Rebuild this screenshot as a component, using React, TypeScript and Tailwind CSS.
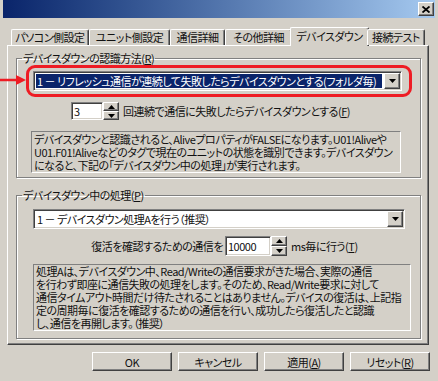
import React from 'react';

const font = "font-['Noto_Sans_CJK_JP','Noto_Sans_CJK_SC',sans-serif] [font-feature-settings:'palt']";

// classic 3D edges
const raised =
    'border border-t-white border-l-white border-b-[#404040] border-r-[#404040] shadow-[inset_-1px_-1px_0_#808080]';
const sunken =
    'border border-t-[#808080] border-l-[#808080] border-b-white border-r-white shadow-[inset_1px_1px_0_#404040,inset_-1px_-1px_0_#d4d0c8]';
const etched = 'border border-[#808080] shadow-[inset_1px_1px_0_#fff,1px_1px_0_#fff]';

type Tab = { label: string; w: string; active?: boolean };

const tabs: Tab[] = [
    { label: 'パソコン側設定', w: 'w-[78px]' },
    { label: 'ユニット側設定', w: 'w-[81px]' },
    { label: '通信詳細', w: 'w-[55px]' },
    { label: 'その他詳細', w: 'w-[67px]' },
    { label: 'デバイスダウン', w: 'w-[79px]', active: true },
    { label: '接続テスト', w: 'w-[58px]' },
];

function DownArrow() {
    return (
        <svg width="7" height="4" viewBox="0 0 7 4">
            <path d="M0 0h7L3.5 4z" fill="#000" />
        </svg>
    );
}

function DropButton() {
    return (
        <div className={`w-[16px] h-[16px] bg-[#d4d0c8] flex items-center justify-center ${raised}`}>
            <DownArrow />
        </div>
    );
}

function Spinner({ h }: { h: string }) {
    return (
        <div className={`flex flex-col w-[16px] ${h}`}>
            <div className={`flex-1 bg-[#d4d0c8] flex items-center justify-center ${raised}`}>
                <svg width="7" height="4" viewBox="0 0 7 4">
                    <path d="M0 4h7L3.5 0z" fill="#000" />
                </svg>
            </div>
            <div className={`flex-1 bg-[#d4d0c8] flex items-center justify-center ${raised}`}>
                <DownArrow />
            </div>
        </div>
    );
}

function Btn({ children }: { children: React.ReactNode }) {
    return (
        <button className={`w-[80px] h-[19px] bg-[#d4d0c8] flex items-center justify-center whitespace-nowrap ${raised}`}>
            {children}
        </button>
    );
}

export default function App() {
    return (
        <div className={`relative w-[438px] h-[381px] bg-[#d4d0c8] px-[3px] text-[11px] tracking-[-0.5px] leading-[14px] text-[#111] overflow-hidden ${font}`}>
            {/* Title bar */}
            <div className="h-[18px] bg-gradient-to-r from-[#0a246a] to-[#a6caf0] flex items-center justify-end pr-[1px]">
                <div className={`w-[16px] h-[14px] bg-[#d4d0c8] flex items-center justify-center ${raised}`}>
                    <svg width="8" height="7" viewBox="0 0 8 7">
                        <path d="M0.5 0.5l7 6M7.5 0.5l-7 6" stroke="#000" strokeWidth="1.8" />
                    </svg>
                </div>
            </div>

            <div className="pl-[4px] pr-[6px] pt-[9px]">
                {/* Tabs */}
                <div className="flex items-end h-[18px] pl-[4px] relative z-10 whitespace-nowrap">
                    {tabs.map((t) =>
                        t.active ? (
                            <div
                                key={t.label}
                                className={`${t.w} -mx-[2px] h-[19px] -mb-[1px] bg-[#d4d0c8] rounded-t-[2px] border border-b-0 border-t-white border-l-white border-r-[#404040] shadow-[inset_-1px_0_0_#808080] flex items-start justify-center pt-[1px]`}
                            >
                                {t.label}
                            </div>
                        ) : (
                            <div
                                key={t.label}
                                className={`${t.w} h-[16px] bg-[#d4d0c8] rounded-t-[2px] border border-b-0 border-t-white border-l-white border-r-[#404040] shadow-[inset_-1px_0_0_#808080] flex items-start justify-center`}
                            >
                                {t.label}
                            </div>
                        )
                    )}
                </div>

                {/* Tab panel */}
                <div className={`h-[300px] pl-[8px] pr-[7px] pt-[5px] ${raised}`}>
                    {/* Group 1 */}
                    <fieldset className={`${etched} pb-[4px]`}>
                        <legend className="ml-[5px] px-[1px] h-[14px]">
                            デバイスダウンの認識方法(<u>R</u>)
                        </legend>
                        <div className="ml-[9px] mr-[8px] h-[32px] border-[3px] border-[#ee1c24] rounded-[9px] pt-[3px] pl-[4px] pr-[7px]">
                            <div className={`h-[20px] bg-white flex items-center pl-[2px] pr-[1px] ${sunken}`}>
                                <div className="flex-1 h-[14px] mr-[2px] bg-[#0a246a] text-white whitespace-nowrap pl-[1px] overflow-hidden">
                                    1 － リフレッシュ通信が連続して失敗したらデバイスダウンとする(フォルダ毎)
                                </div>
                                <DropButton />
                            </div>
                        </div>

                        <div className="flex items-center mt-[5px] ml-[54px] h-[18px]">
                            <div className={`w-[32px] h-[18px] bg-white pl-[2px] flex items-center ${sunken}`}>3</div>
                            <Spinner h="h-[18px]" />
                            <span className="ml-[4px] whitespace-nowrap">
                                回連続で通信に失敗したらデバイスダウンとする(<u>F</u>)
                            </span>
                        </div>

                        <div className="mt-[11px] ml-[14px] w-[370px] h-[42px] border border-t-[#808080] border-l-[#808080] border-b-white border-r-white pl-[2px] pt-[1px] leading-[13px] whitespace-nowrap">
                            デバイスダウンと認識されると、AliveプロパティがFALSEになります。U01!Aliveや
                            <br />
                            U01.F01!Aliveなどのタグで現在のユニットの状態を識別できます。デバイスダウン
                            <br />
                            になると、下記の「デバイスダウン中の処理」が実行されます。
                        </div>
                    </fieldset>

                    {/* Group 2 */}
                    <fieldset className={`${etched} mt-[10px] pb-[7px]`}>
                        <legend className="ml-[5px] px-[1px] h-[14px]">
                            デバイスダウン中の処理(<u>P</u>)
                        </legend>
                        <div className={`mt-[7px] ml-[16px] w-[372px] h-[20px] bg-white flex items-center pl-[3px] pr-[1px] ${sunken}`}>
                            <div className="flex-1 whitespace-nowrap">1 － デバイスダウン処理Aを行う（推奨）</div>
                            <DropButton />
                        </div>

                        <div className="mt-[7px] h-[20px] flex items-center">
                            <div className="w-[208px] text-right pr-[2px] whitespace-nowrap">復活を確認するための通信を</div>
                            <div className={`w-[46px] h-[20px] bg-white pl-[2px] flex items-center ${sunken}`}>10000</div>
                            <Spinner h="h-[20px]" />
                            <span className="ml-[4px] whitespace-nowrap">
                                ms毎に行う(<u>T</u>)
                            </span>
                        </div>

                        <div className="mt-[8px] ml-[16px] w-[378px] h-[67px] border border-t-[#808080] border-l-[#808080] border-b-white border-r-white pl-[2px] leading-[13px] whitespace-nowrap">
                            処理Aは、デバイスダウン中、Read/Writeの通信要求がきた場合、実際の通信
                            <br />
                            を行わず即座に通信失敗の処理をします。そのため、Read/Write要求に対して
                            <br />
                            通信タイムアウト時間だけ待たされることはありません。デバイスの復活は、上記指
                            <br />
                            定の周期毎に復活を確認するための通信を行い、成功したら復活したと認識
                            <br />
                            し、通信を再開します。（推奨）
                        </div>
                    </fieldset>
                </div>
            </div>

            {/* Buttons */}
            <div className="flex justify-end gap-[6px] mt-[7px] pr-[5px]">
                <Btn>OK</Btn>
                <Btn>キャンセル</Btn>
                <Btn>
                    適用(<u>A</u>)
                </Btn>
                <Btn>
                    リセット(<u>R</u>)
                </Btn>
            </div>

            {/* Red annotation arrow */}
            <svg className="absolute left-0 top-[74px]" width="28" height="12" viewBox="0 0 28 12">
                <path d="M0 6h18" stroke="#ee1c24" strokeWidth="2.5" />
                <path d="M16 1l10 5-10 5z" fill="#ee1c24" />
            </svg>
        </div>
    );
}
